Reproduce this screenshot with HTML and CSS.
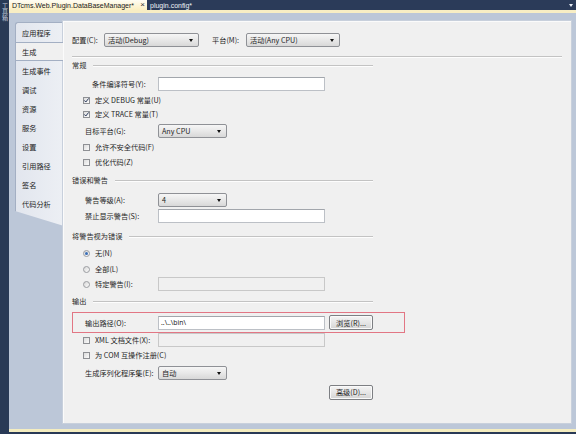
FILE: index.html
```html
<!DOCTYPE html>
<html>
<head>
<meta charset="utf-8">
<link rel="stylesheet" href="styles.css">
</head>
<body>
<div class="app">
  <div class="dock"><span class="dock-text">工具箱</span></div>
  <div class="main">
    <div class="tabbar">
      <div class="doc-tab active"><span>DTcms.Web.Plugin.DataBaseManager*</span><span class="close">×</span></div>
      <div class="doc-tab"><span>plugin.config*</span></div>
      <div class="tab-menu"><span class="tri-w"></span></div>
    </div>
    <div class="tabline"></div>
    <div class="workspace">
      <div class="sidebar">
        <div class="tabs">
          <div class="tab">应用程序</div>
          <div class="tab selected">生成</div>
          <div class="tab">生成事件</div>
          <div class="tab">调试</div>
          <div class="tab">资源</div>
          <div class="tab">服务</div>
          <div class="tab">设置</div>
          <div class="tab">引用路径</div>
          <div class="tab">签名</div>
          <div class="tab">代码分析</div>
          <div class="tab-tail"></div>
        </div>
      </div>
      <div class="panel">
        <div class="row config">
          <span class="cfg-label">配置(C):</span>
          <div class="select w95"><span>活动(Debug)</span><span class="tri"></span></div>
          <span class="cfg-label plat">平台(M):</span>
          <div class="select w94"><span>活动(Any CPU)</span><span class="tri"></span></div>
        </div>
        <div class="rule"></div>

        <div class="section">常规</div>
        <div class="row m5 cond">
          <span class="label lw66">条件编译符号(Y):</span>
          <div class="input"></div>
        </div>
        <div class="row chk m2"><span class="box"><svg width="7" height="7" viewBox="0 0 7 7"><path d="M1.3 3.4 L2.8 5 L5.7 1.4" fill="none" stroke="#2a3a5c" stroke-width="1"/></svg></span>定义 DEBUG 常量(U)</div>
        <div class="row chk"><span class="box"><svg width="7" height="7" viewBox="0 0 7 7"><path d="M1.3 3.4 L2.8 5 L5.7 1.4" fill="none" stroke="#2a3a5c" stroke-width="1"/></svg></span>定义 TRACE 常量(T)</div>
        <div class="row ind m3">
          <span class="label">目标平台(G):</span>
          <div class="select w69"><span>Any CPU</span><span class="tri"></span></div>
        </div>
        <div class="row chk m2"><span class="box"></span>允许不安全代码(F)</div>
        <div class="row chk m1"><span class="box"></span>优化代码(Z)</div>

        <div class="section m4">错误和警告</div>
        <div class="row ind m6">
          <span class="label">警告等级(A):</span>
          <div class="select w69"><span>4</span><span class="tri"></span></div>
        </div>
        <div class="row ind m2">
          <span class="label">禁止显示警告(S):</span>
          <div class="input"></div>
        </div>

        <div class="section m6">将警告视为错误</div>
        <div class="row chk m3"><span class="radio on"></span>无(N)</div>
        <div class="row chk m2"><span class="radio"></span>全部(L)</div>
        <div class="row chk m1">
          <span class="radio"></span><span class="label lw63">特定警告(I):</span>
          <div class="input disabled"></div>
        </div>

        <div class="section m3">输出</div>
        <div class="highlight m4">
          <span class="label">输出路径(O):</span>
          <div class="input"><span class="val">..\..\bin\</span></div>
          <div class="btn">浏览(R)...</div>
        </div>
        <div class="row chk">
          <span class="box"></span><span class="label lw63">XML 文档文件(X):</span>
          <div class="input disabled"></div>
        </div>
        <div class="row chk m1"><span class="box"></span>为 COM 互操作注册(C)</div>
        <div class="row ind m4">
          <span class="label">生成序列化程序集(E):</span>
          <div class="select w69"><span>自动</span><span class="tri"></span></div>
        </div>
        <div class="row m5 adv">
          <div class="btn">高级(D)...</div>
        </div>
      </div>
    </div>
    <div class="bottomline"></div>
  </div>
</div>
</body>
</html>
```

FILE: styles.css
```css
* { box-sizing: border-box; margin: 0; padding: 0; }
html, body { width: 576px; height: 434px; overflow: hidden; }
body {
  background: #293a56;
  font-family: "Noto Sans CJK SC", "Noto Sans", sans-serif;
  font-size: 7.2px;
  color: #1e1e1e;
}
.app { display: flex; height: 434px; }
.dock {
  width: 9px; flex: none; background: #293a56;
  display: flex; justify-content: center; padding-top: 3px;
}
.dock-text {
  writing-mode: vertical-rl; font-size: 6px; color: #c7cfdc; line-height: 8px;
}
.main { flex: 1; display: flex; flex-direction: column; background: #293a56; }

/* document tabs */
.tabbar { height: 10px; display: flex; background: #2b3b59; flex: none; }
.doc-tab {
  display: flex; align-items: center; padding: 0 3px;
  font-family: "Liberation Sans", sans-serif; font-size: 7px; color: #eef2f8;
}
.doc-tab.active {
  width: 138px; justify-content: space-between; color: #1a1a1a;
  background: linear-gradient(#fffdf3, #fbefc1);
  padding-right: 2px;
}
.close { font-size: 8px; line-height: 8px; color: #333; }
.tab-menu { margin-left: auto; width: 10px; display: flex; align-items: center; justify-content: center; }
.tri-w { width: 0; height: 0; border-left: 2.5px solid transparent; border-right: 2.5px solid transparent; border-top: 3px solid #e8edf5; }
.tabline { height: 3px; background: #f8eec4; flex: none; }

/* workspace */
.workspace {
  height: 416px; flex: none; background: #bcc7d8;
  display: flex; padding: 7px 4px 5px 0;
}
.sidebar { width: 53px; flex: none; padding: 2px 0 0 6px; }
.tabs {
  background: linear-gradient(90deg, #e2e6ee, #eceff4);
  border-left: 1px solid #a3afc3; border-top: 1px solid #a3afc3;
  border-top-left-radius: 3px;
  clip-path: polygon(0 0, calc(100% + 2px) 0, calc(100% + 2px) 100%, 0 calc(100% - 15px));
}
.tab { height: 19px; display: flex; align-items: center; padding-left: 6px; color: #222; }
.tab.selected {
  background: #f0f0f0; margin-right: -1px;
  border-top: 1px solid #a3afc3; border-bottom: 1px solid #a3afc3;
}
.tab-tail { height: 13px; }

.panel {
  flex: 1; background: #f0f0f0;
  border: 1px solid #c8d0dc;
  box-shadow: inset 1px 1px 0 #fbfbfb;
  padding: 12px 9px 0 9px;
  display: flex; flex-direction: column;
}

/* rows */
.row { display: flex; align-items: center; height: 14px; flex: none; }
.m1 { margin-top: 1px; } .m2 { margin-top: 2px; } .m3 { margin-top: 3px; }
.m4 { margin-top: 4px; } .m5 { margin-top: 5px; } .m6 { margin-top: 6px; }

.cfg-label { width: 32px; }
.cfg-label.plat { margin-left: 13px; width: 34px; }
.rule {
  height: 2px; margin-top: 9px; flex: none;
  border-top: 1px solid #c3c3c3; border-bottom: 1px solid #fdfdfd;
}
.section {
  display: flex; align-items: center; height: 14px; width: 301px; flex: none; color: #2a2a2a;
}
.section::after {
  content: ""; flex: 1; height: 1px; margin-left: 7px;
  background: #c3c3c3; box-shadow: 0 1px 0 #fdfdfd;
}

.ind { padding-left: 13px; }
.label { width: 73px; flex: none; white-space: nowrap; }
.cond { padding-left: 20px; }
.lw66 { width: 66px; }
.lw63 { width: 63px; }
.chk { padding-left: 11px; }

.box {
  width: 7px; height: 7px; flex: none; margin-right: 5px;
  border: 1px solid #8e9094;
  background: linear-gradient(135deg, #dcdcdc, #fbfbfb);
  display: flex; align-items: center; justify-content: center;
}
.box svg { display: block; margin: -1px; }
.radio {
  width: 7px; height: 7px; flex: none; margin-right: 5px;
  border: 1px solid #9a9ca0; border-radius: 50%;
  background: linear-gradient(135deg, #d8d8d8, #fbfbfb);
  display: flex; align-items: center; justify-content: center;
}
.radio.on::after {
  content: ""; width: 3px; height: 3px; border-radius: 50%;
  background: #3a6fb8;
}

.select {
  height: 14px; display: flex; align-items: center; justify-content: space-between;
  border: 1px solid #8f9196; border-radius: 2px;
  background: linear-gradient(#f6f6f6, #e8e8e8 50%, #d8d8d8);
  padding: 0 5px 0 3px; flex: none;
  font-family: "Noto Sans", "Noto Sans CJK SC", sans-serif;
}
.select span:first-child { font-family: "Noto Sans CJK SC", sans-serif; }
.w95 { width: 95px; } .w94 { width: 94px; } .w69 { width: 69px; }
.tri {
  width: 0; height: 0;
  border-left: 2.5px solid transparent; border-right: 2.5px solid transparent;
  border-top: 3px solid #111;
}

.input {
  width: 167px; height: 14px; flex: none; background: #fff;
  border: 1px solid #bcc0c6; border-top-color: #a2a6ac;
  display: flex; align-items: center; padding-left: 2px;
}
.input.disabled { background: #f0f0f0; border-color: #c8c8c8; }
.val { font-family: "Noto Sans", sans-serif; font-size: 6.8px; }

.highlight {
  display: flex; align-items: center; flex: none;
  width: 333px; height: 21px;
  border: 1px solid #e27684;
  padding-left: 12px;
}
.btn {
  width: 44px; height: 15px; flex: none; margin-left: 4px;
  border: 1px solid #7d7f83; border-radius: 2px;
  background: linear-gradient(#f4f4f4, #e6e6e6 50%, #d4d4d4);
  display: flex; align-items: center; justify-content: center;
  box-shadow: inset 0 0 0 1px #fafafa;
}
.adv { padding-left: 253px; }
.bottomline { height: 3px; background: #f4edc0; flex: none; }
```
